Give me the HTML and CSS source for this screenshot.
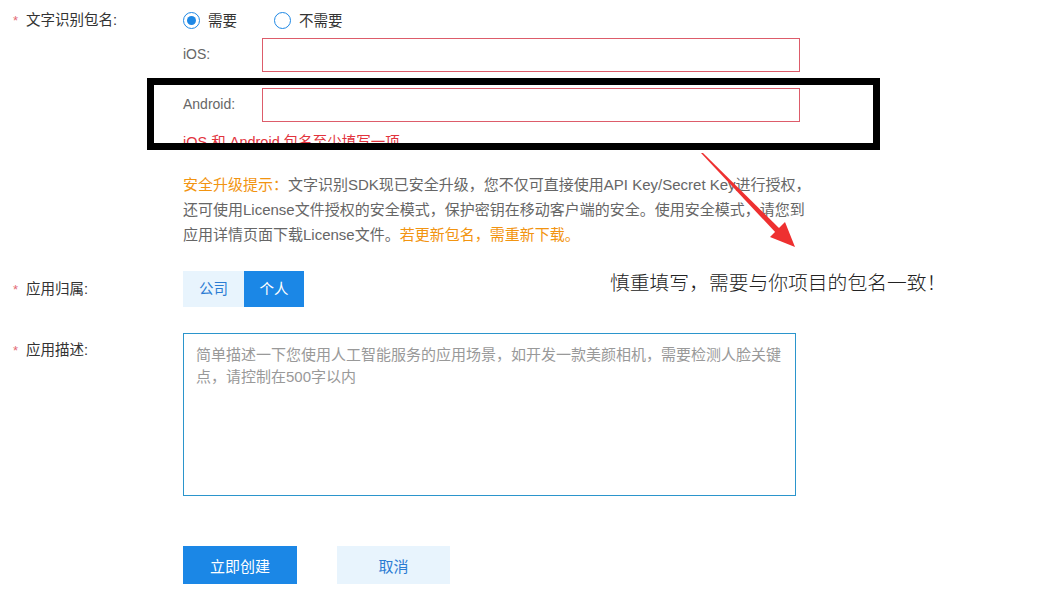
FILE: index.html
```html
<!DOCTYPE html>
<html lang="zh-CN">
<head>
<meta charset="utf-8">
<title>创建应用</title>
<link rel="stylesheet" href="styles.css">
</head>
<body>
<div class="page">
  <form class="form">
    <div class="row">
      <div class="label"><span class="star">*</span>文字识别包名:</div>
      <div class="field">
        <div class="radios">
          <label class="radio"><span class="dot checked"></span>需要</label>
          <label class="radio"><span class="dot"></span>不需要</label>
        </div>
        <div class="sub">
          <span class="sub-label">iOS:</span>
          <input class="input" type="text">
        </div>
        <div class="sub sub-2">
          <span class="sub-label">Android:</span>
          <input class="input" type="text">
        </div>
        <div class="error">iOS 和 Android 包名至少填写一项</div>
        <p class="tip"><span class="warn">安全升级提示：</span>文字识别SDK现已安全升级，您不仅可直接使用API Key/Secret Key进行授权，<br>还可使用License文件授权的安全模式，保护密钥在移动客户端的安全。使用安全模式，请您到<br>应用详情页面下载License文件。<span class="warn">若更新包名，需重新下载。</span></p>
      </div>
    </div>

    <div class="row row-owner">
      <div class="label"><span class="star">*</span>应用归属:</div>
      <div class="toggle">
        <span class="opt">公司</span>
        <span class="opt active">个人</span>
      </div>
    </div>

    <div class="row row-desc">
      <div class="label label-top"><span class="star">*</span>应用描述:</div>
      <div class="textarea-wrap">
        <textarea class="textarea" placeholder="简单描述一下您使用人工智能服务的应用场景，如开发一款美颜相机，需要检测人脸关键点，请控制在500字以内"></textarea>
      </div>
    </div>

    <div class="actions">
      <button type="button" class="btn primary">立即创建</button>
      <button type="button" class="btn ghost">取消</button>
    </div>
  </form>

  <div class="mark-box"></div>
  <svg class="mark-arrow" width="100" height="100" viewBox="0 0 100 100">
    <polygon points="1,0 3,0 81,77 77,81" fill="#ee3030"/>
    <polygon points="95,94 70,84 85,69" fill="#ee3030"/>
  </svg>
  <div class="mark-note">慎重填写，需要与你项目的包名一致！</div>
</div>
</body>
</html>
```

FILE: styles.css
```css
html, body {
  margin: 0;
  padding: 0;
  background: #fff;
}
body {
  font-family: "Liberation Sans", "Noto Sans CJK SC", sans-serif;
  font-size: 14.5px;
  color: #333;
}
.page {
  position: relative;
  width: 1037px;
  height: 601px;
  overflow: hidden;
}
.form {
  padding-top: 10px;
}
.row {
  display: flex;
  align-items: flex-start;
}
.label {
  width: 183px;
  flex: none;
  box-sizing: border-box;
  padding-left: 13px;
  line-height: 20px;
  color: #333;
}
.star {
  display: inline-block;
  width: 13px;
  color: #e36b75;
  font-size: 13px;
}
.field {
  flex: 1;
}
.radios {
  display: flex;
  height: 20px;
  align-items: center;
}
.radio {
  display: flex;
  align-items: center;
  line-height: 20px;
  margin-right: 37px;
  color: #333;
  position: relative;
  top: 1px;
}
.dot {
  width: 15px;
  height: 15px;
  border: 1px solid #1e88e5;
  border-radius: 50%;
  margin-right: 8px;
  position: relative;
  top: -1px;
  box-sizing: content-box;
}
.dot.checked::after {
  content: "";
  position: absolute;
  left: 3px;
  top: 3px;
  width: 9px;
  height: 9px;
  border-radius: 50%;
  background: #1e88e5;
}
.sub {
  display: flex;
  align-items: center;
  margin-top: 8px;
}
.sub-2 {
  margin-top: 16px;
}
.sub-label {
  width: 79px;
  color: #666;
  font-size: 14px;
  position: relative;
  top: -1px;
}
.input {
  width: 538px;
  height: 34px;
  box-sizing: border-box;
  border: 1px solid #dd5c6a;
  margin: 0;
  padding: 0 10px;
  outline: none;
  font: inherit;
}
.error {
  margin-top: 10px;
  line-height: 20px;
  color: #e2333d;
  font-size: 14.5px;
}
.tip {
  margin: 20px 0 0;
  line-height: 25px;
  color: #666;
  font-size: 15px;
}
.warn {
  color: #f29410;
}
.row-owner {
  margin-top: 24px;
  align-items: center;
}
.toggle {
  display: flex;
}
.opt {
  height: 36px;
  line-height: 36px;
  width: 61px;
  text-align: center;
  background: #e8f4fd;
  color: #2b7cd3;
}
.opt.active {
  width: 60px;
  background: #1b87e6;
  color: #fff;
}
.row-desc {
  margin-top: 26px;
}
.label-top {
  padding-top: 7px;
}
.textarea-wrap {
  width: 613px;
  height: 163px;
  box-sizing: border-box;
  border: 1px solid #2b95cc;
  background: #fff;
}
.textarea {
  display: block;
  -webkit-appearance: none;
  appearance: none;
  width: 100%;
  height: 100%;
  box-sizing: border-box;
  border: 0;
  margin: 0;
  padding: 10px 12px;
  font-family: inherit;
  font-size: 15px;
  line-height: 22px;
  resize: none;
  outline: none;
  color: #333;
  background: transparent;
}
.textarea::placeholder {
  color: #999;
}
.actions {
  display: flex;
  gap: 40px;
  margin-top: 50px;
  padding-left: 183px;
}
.btn {
  width: 114px;
  height: 38px;
  border: none;
  margin: 0;
  padding: 0;
  font-family: inherit;
  font-size: 15px;
  cursor: pointer;
}
.btn.primary {
  background: #1b87e6;
  color: #fff;
}
.btn.ghost {
  width: 113px;
  background: #e8f4fd;
  color: #2b7cd3;
}

/* annotation overlays drawn on top of the screenshot */
.mark-box {
  position: absolute;
  left: 147px;
  top: 78px;
  width: 733px;
  height: 72px;
  box-sizing: border-box;
  border: 7px solid #000;
}
.mark-arrow {
  position: absolute;
  left: 700px;
  top: 153px;
}
.mark-note {
  position: absolute;
  left: 610px;
  top: 269px;
  font-size: 19.8px;
  line-height: 26px;
  font-weight: 300;
  color: #222;
  font-family: "Noto Sans CJK SC", sans-serif;
}
```
